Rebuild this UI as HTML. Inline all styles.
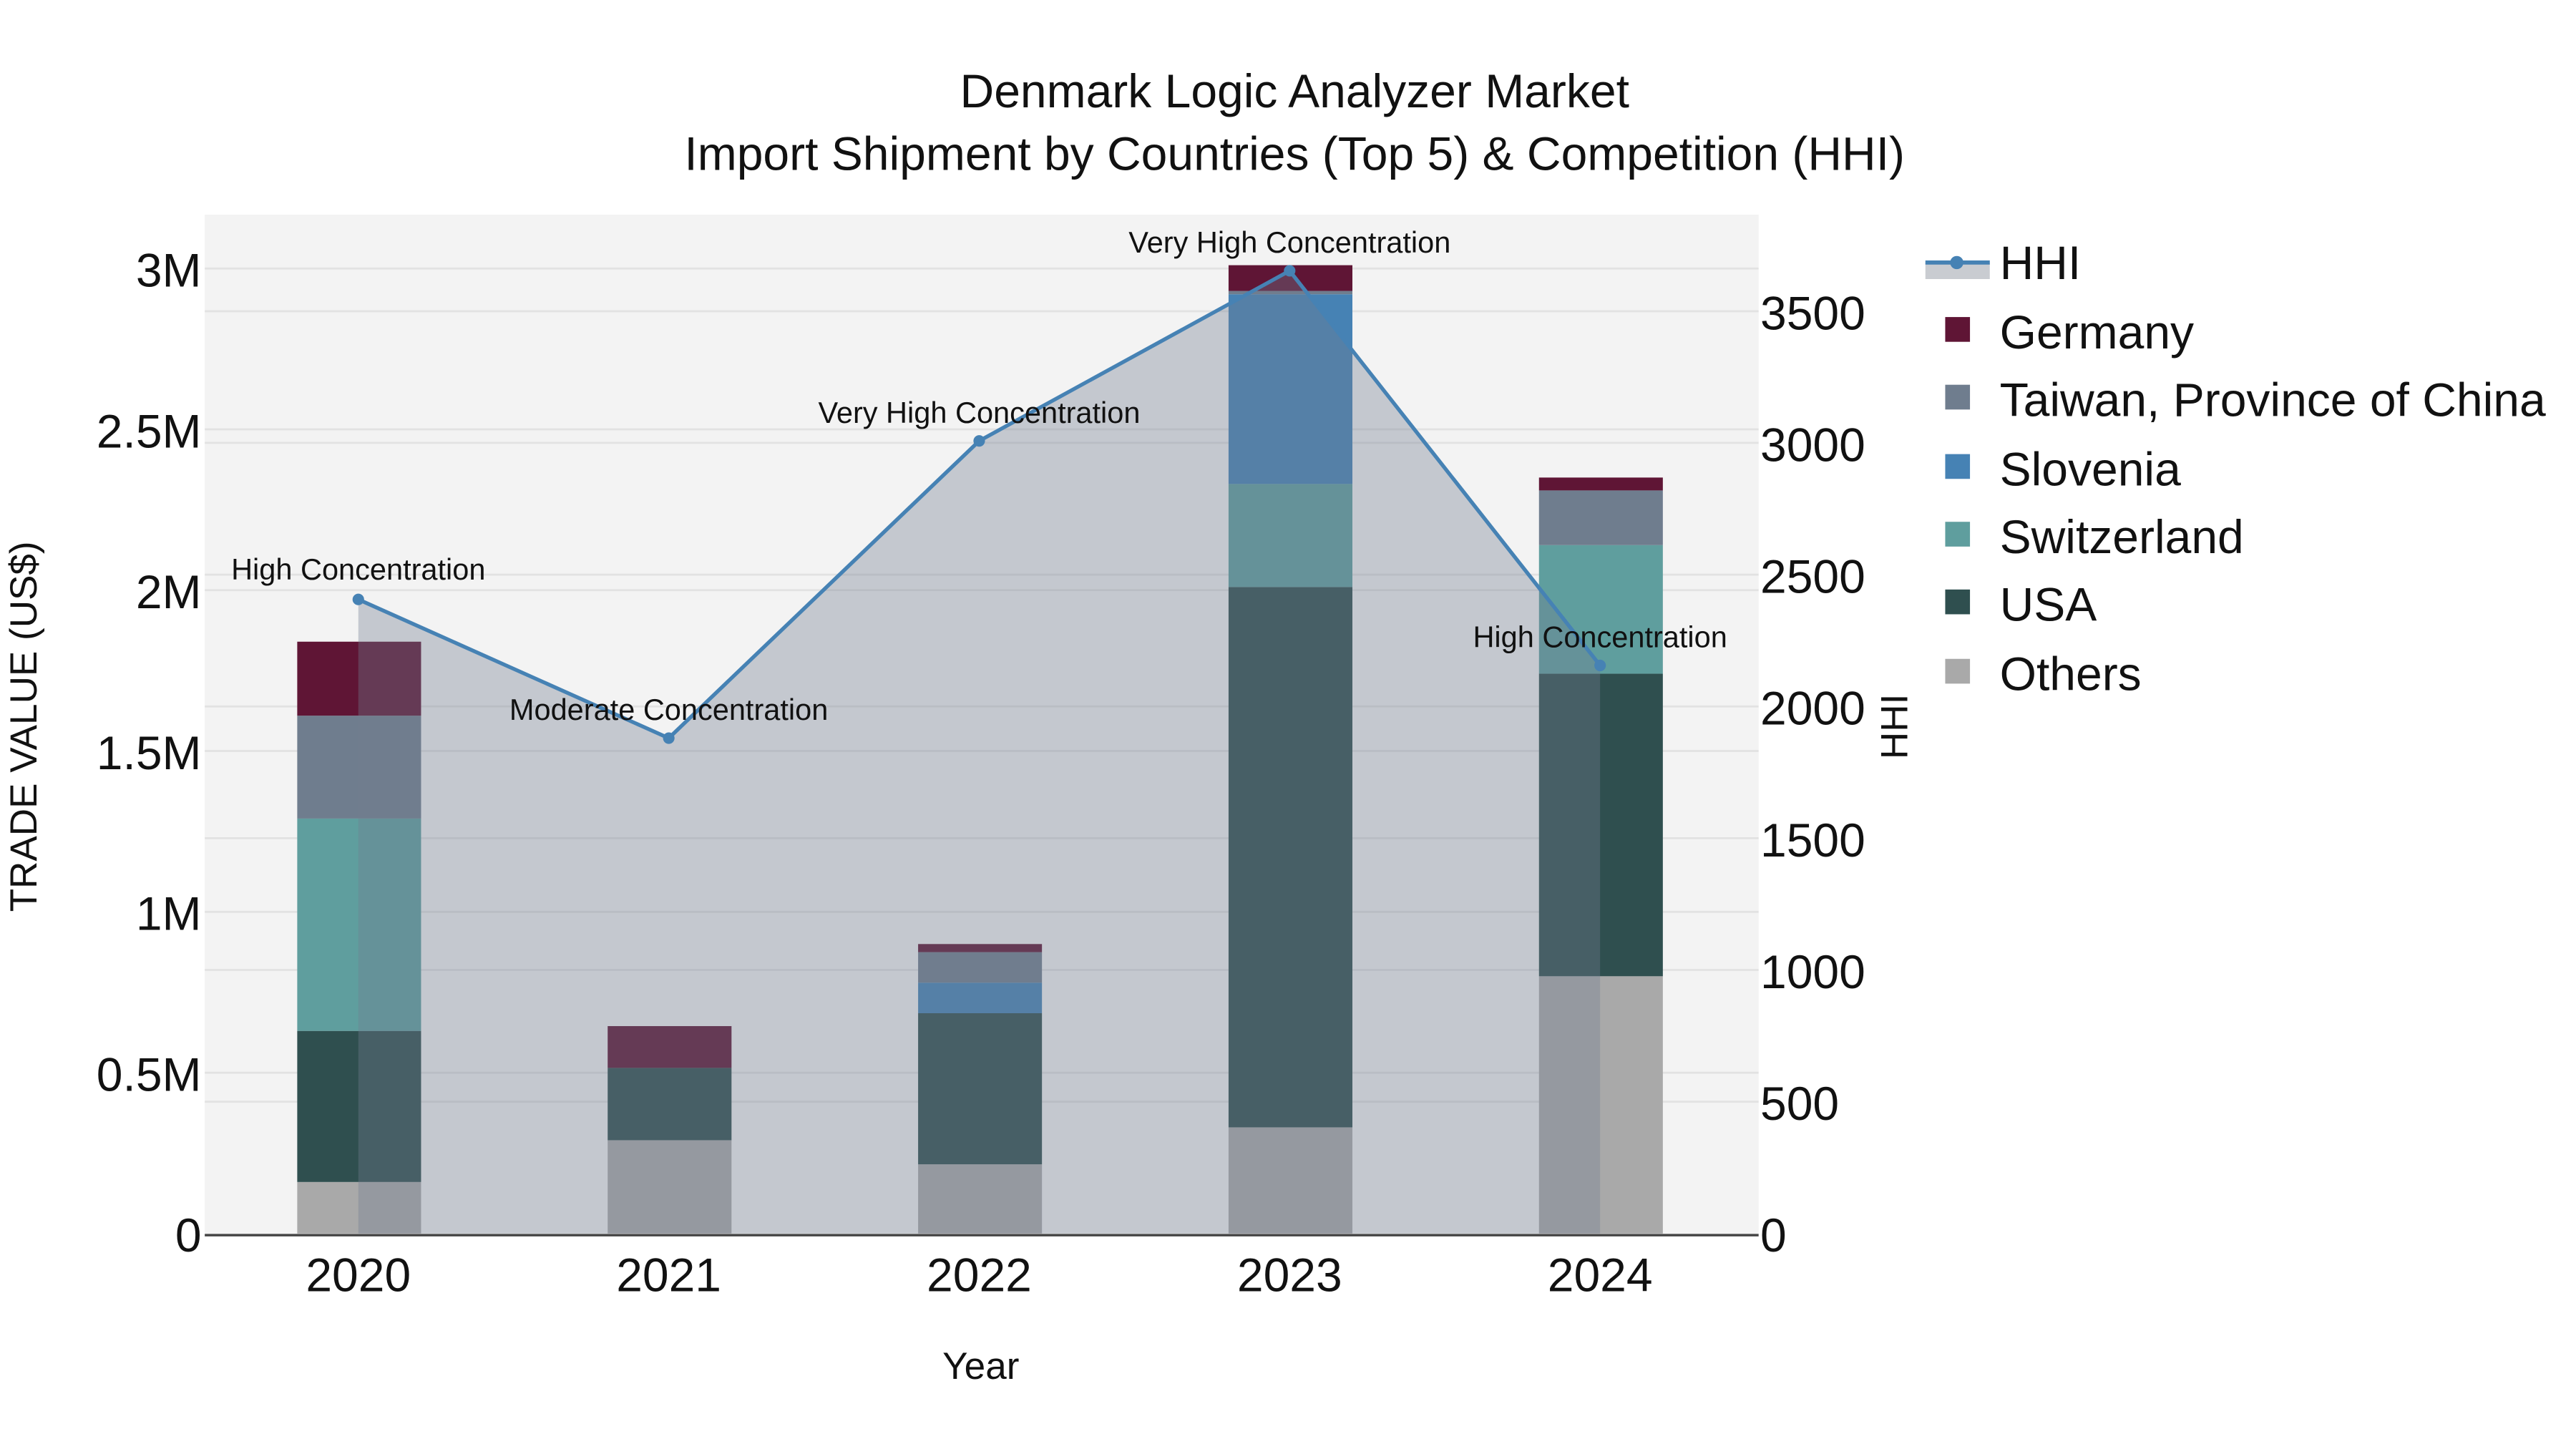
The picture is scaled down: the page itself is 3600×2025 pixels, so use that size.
<!DOCTYPE html>
<html><head><meta charset="utf-8"><style>
html,body{margin:0;padding:0;background:#fff;}
svg{display:block;}
text{font-family:"Liberation Sans",sans-serif;fill:#111;}
</style></head><body>
<svg width="3600" height="2025" viewBox="0 0 1560 877.5" xmlns="http://www.w3.org/2000/svg">
<rect x="0" y="0" width="1560" height="877.5" fill="#fff"/>
<rect x="124" y="130" width="941" height="617" fill="#f3f3f3"/>
<g stroke="#e2e2e2" stroke-width="1.2">
<line x1="124" x2="1065" y1="649.6" y2="649.6"/><line x1="124" x2="1065" y1="552.2" y2="552.2"/>
<line x1="124" x2="1065" y1="454.8" y2="454.8"/><line x1="124" x2="1065" y1="357.4" y2="357.4"/>
<line x1="124" x2="1065" y1="260" y2="260"/><line x1="124" x2="1065" y1="162.6" y2="162.6"/>
<line x1="124" x2="1065" y1="667.2" y2="667.2"/><line x1="124" x2="1065" y1="587.4" y2="587.4"/>
<line x1="124" x2="1065" y1="507.6" y2="507.6"/><line x1="124" x2="1065" y1="427.8" y2="427.8"/>
<line x1="124" x2="1065" y1="348" y2="348"/><line x1="124" x2="1065" y1="268.2" y2="268.2"/>
<line x1="124" x2="1065" y1="188.5" y2="188.5"/>
</g>
<g>
<rect x="180" y="715.8" width="75" height="31.2" fill="#a9a9a9"/>
<rect x="180" y="624.3" width="75" height="91.5" fill="#2f4f4f"/>
<rect x="180" y="495.7" width="75" height="128.6" fill="#5f9e9e"/>
<rect x="180" y="433.4" width="75" height="62.3" fill="#6f7d8e"/>
<rect x="180" y="388.6" width="75" height="44.8" fill="#5f1535"/>
<rect x="368" y="690.5" width="75" height="56.5" fill="#a9a9a9"/>
<rect x="368" y="646.7" width="75" height="43.8" fill="#2f4f4f"/>
<rect x="368" y="621.4" width="75" height="25.3" fill="#5f1535"/>
<rect x="556" y="705.1" width="75" height="41.9" fill="#a9a9a9"/>
<rect x="556" y="613.6" width="75" height="91.5" fill="#2f4f4f"/>
<rect x="556" y="595.1" width="75" height="18.5" fill="#4682b4"/>
<rect x="556" y="576.6" width="75" height="18.5" fill="#6f7d8e"/>
<rect x="556" y="571.7" width="75" height="4.9" fill="#5f1535"/>
<rect x="744" y="682.7" width="75" height="64.3" fill="#a9a9a9"/>
<rect x="744" y="355.5" width="75" height="327.2" fill="#2f4f4f"/>
<rect x="744" y="293.1" width="75" height="62.4" fill="#5f9e9e"/>
<rect x="744" y="178.2" width="75" height="114.9" fill="#4682b4"/>
<rect x="744" y="176.2" width="75" height="2" fill="#6f7d8e"/>
<rect x="744" y="160.6" width="75" height="15.6" fill="#5f1535"/>
<rect x="932" y="591.2" width="75" height="155.8" fill="#a9a9a9"/>
<rect x="932" y="408" width="75" height="183.2" fill="#2f4f4f"/>
<rect x="932" y="330.1" width="75" height="77.9" fill="#5f9e9e"/>
<rect x="932" y="297" width="75" height="33.1" fill="#6f7d8e"/>
<rect x="932" y="289.2" width="75" height="7.8" fill="#5f1535"/>
</g>
<polygon points="217,363 405,447 593,267 781,164 969,403 969,747 217,747" fill="#717d8f" fill-opacity="0.36"/>
<polyline points="217,363 405,447 593,267 781,164 969,403" fill="none" stroke="#4682b4" stroke-width="2.3"/>
<g fill="#4682b4"><circle cx="217" cy="363" r="3.5"/><circle cx="405" cy="447" r="3.5"/><circle cx="593" cy="267" r="3.5"/><circle cx="781" cy="164" r="3.5"/><circle cx="969" cy="403" r="3.5"/></g>
<line x1="124" x2="1065" y1="748" y2="748" stroke="#444" stroke-width="1.5"/>
<g font-size="18" text-anchor="middle">
<text x="217" y="351">High Concentration</text>
<text x="405" y="436">Moderate Concentration</text>
<text x="593" y="256">Very High Concentration</text>
<text x="781" y="153">Very High Concentration</text>
<text x="969" y="392">High Concentration</text>
</g>
<g font-size="28.6" text-anchor="end">
<text x="122" y="758">0</text><text x="122" y="660.6">0.5M</text><text x="122" y="563.2">1M</text>
<text x="122" y="465.8">1.5M</text><text x="122" y="368.4">2M</text><text x="122" y="271">2.5M</text><text x="122" y="173.6">3M</text>
</g>
<g font-size="28.6" text-anchor="start">
<text x="1066" y="758">0</text><text x="1066" y="678.2">500</text><text x="1066" y="598.4">1000</text>
<text x="1066" y="518.6">1500</text><text x="1066" y="438.8">2000</text><text x="1066" y="359">2500</text>
<text x="1066" y="279.2">3000</text><text x="1066" y="199.5">3500</text>
</g>
<g font-size="28.6" text-anchor="middle">
<text x="217" y="782">2020</text><text x="405" y="782">2021</text><text x="593" y="782">2022</text><text x="781" y="782">2023</text><text x="969" y="782">2024</text>
</g>
<text x="594" y="835" font-size="23" text-anchor="middle">Year</text>
<text transform="translate(22,440) rotate(-90)" font-size="23" text-anchor="middle">TRADE VALUE (US$)</text>
<text transform="translate(1155,440) rotate(-90)" font-size="23" text-anchor="middle">HHI</text>
<text x="784" y="65" font-size="28.6" text-anchor="middle">Denmark Logic Analyzer Market</text>
<text x="784" y="103" font-size="28.6" text-anchor="middle">Import Shipment by Countries (Top 5) &amp; Competition (HHI)</text>
<rect x="1166" y="159" width="39" height="10" fill="#c9ccd1"/>
<line x1="1166" x2="1205" y1="159" y2="159" stroke="#4682b4" stroke-width="2.5"/>
<circle cx="1185" cy="159" r="4" fill="#4682b4"/>
<rect x="1178" y="192" width="15" height="15" fill="#5f1535"/>
<rect x="1178" y="233" width="15" height="15" fill="#6f7d8e"/>
<rect x="1178" y="275" width="15" height="15" fill="#4682b4"/>
<rect x="1178" y="316" width="15" height="15" fill="#5f9e9e"/>
<rect x="1178" y="357" width="15" height="15" fill="#2f4f4f"/>
<rect x="1178" y="399" width="15" height="15" fill="#a9a9a9"/>
<g font-size="28.6">
<text x="1211" y="169">HHI</text>
<text x="1211" y="211">Germany</text>
<text x="1211" y="252">Taiwan, Province of China</text>
<text x="1211" y="294">Slovenia</text>
<text x="1211" y="335">Switzerland</text>
<text x="1211" y="376">USA</text>
<text x="1211" y="418">Others</text>
</g>
</svg>
</body></html>
